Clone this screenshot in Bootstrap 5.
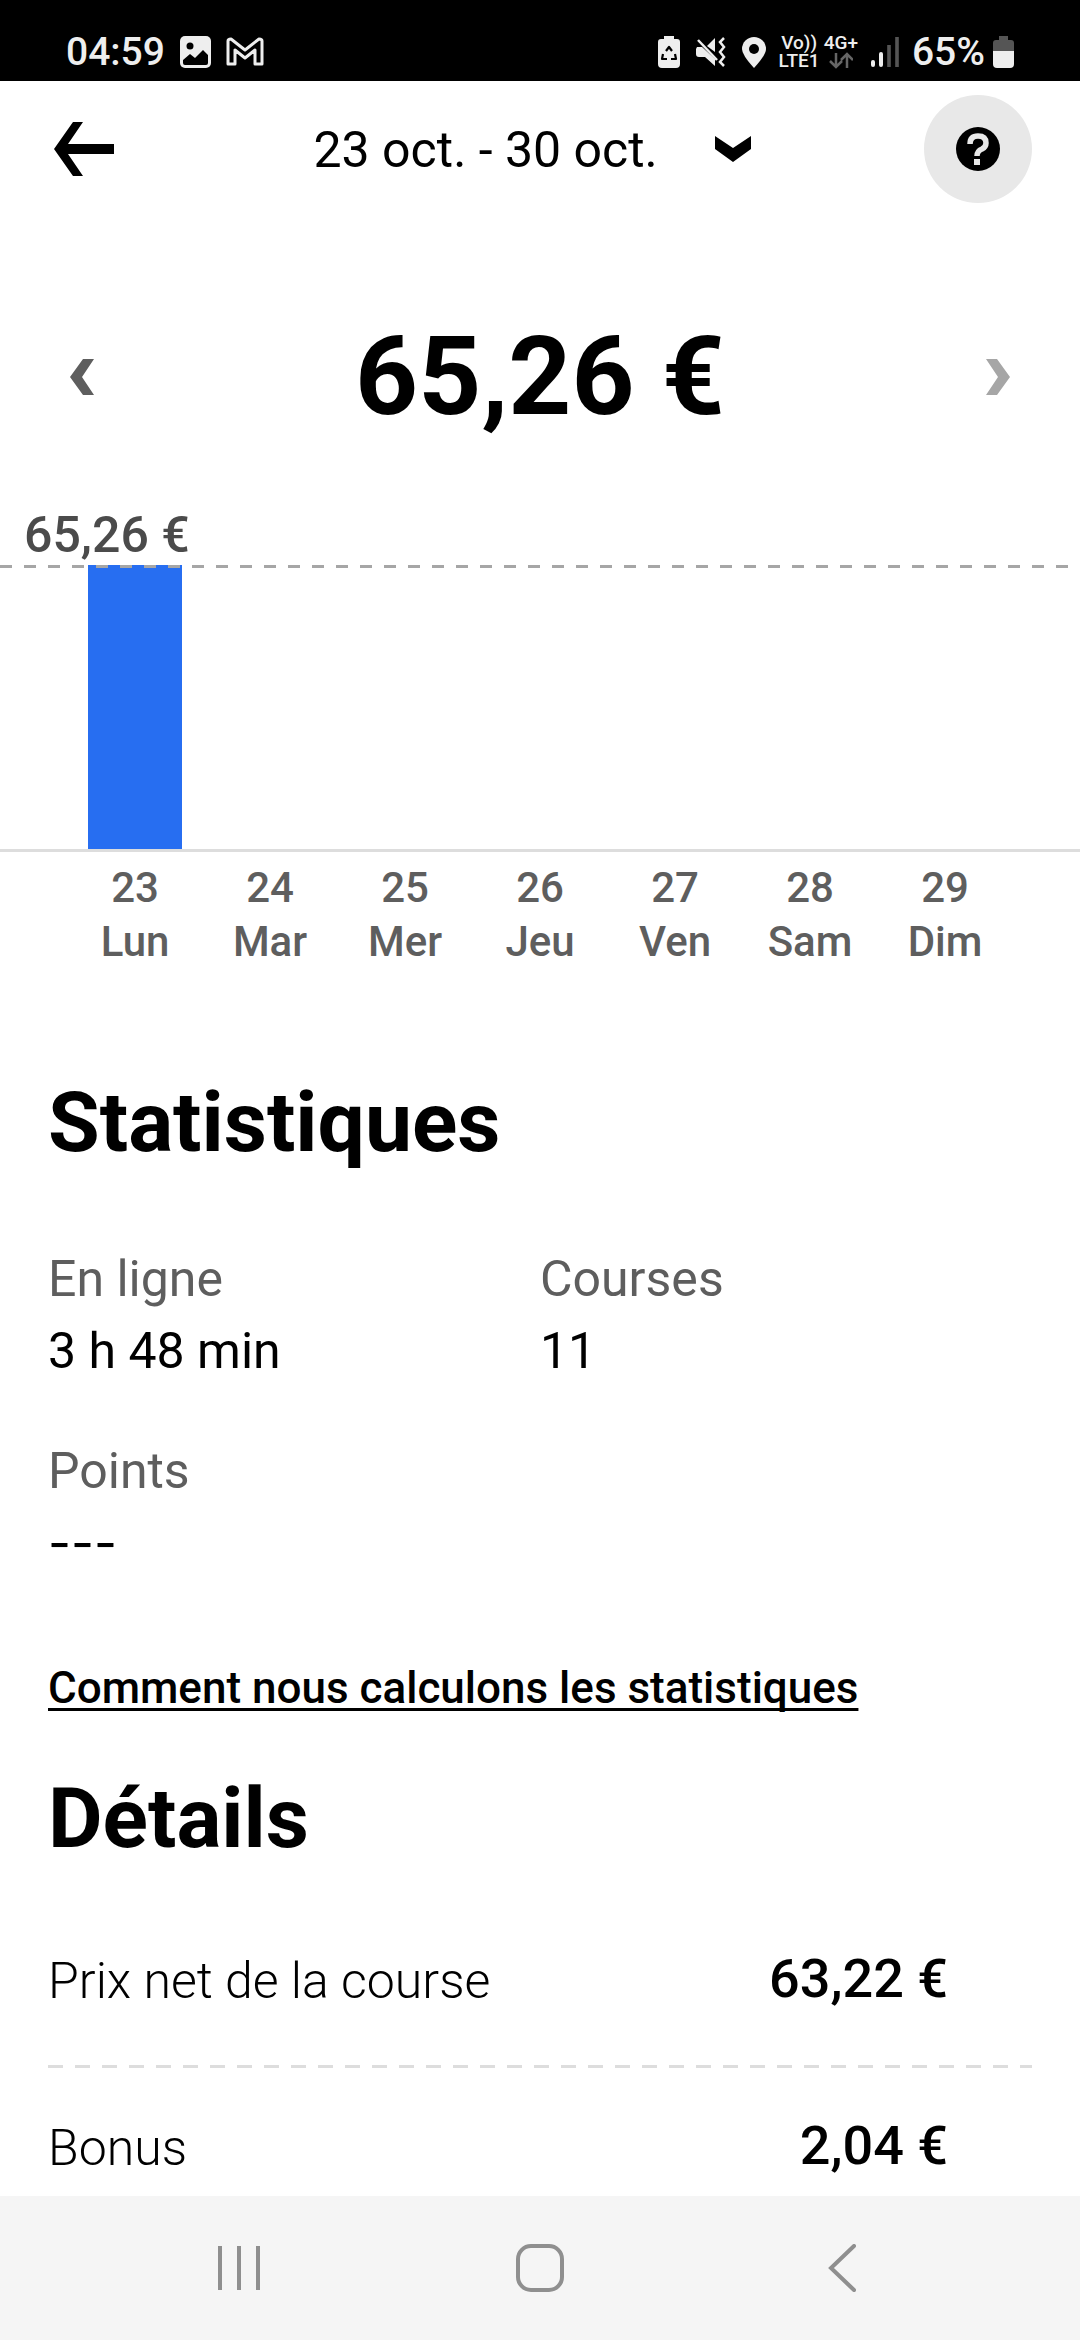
<!DOCTYPE html>
<html lang="fr">
<head>
<meta charset="utf-8">
<meta name="viewport" content="width=device-width, initial-scale=1">
<title>Revenus</title>
<link href="https://cdn.jsdelivr.net/npm/bootstrap@5.3.0/dist/css/bootstrap.min.css" rel="stylesheet">
<style>
body{font-family:Roboto,"Liberation Sans",sans-serif;color:#000;background:#fff}
svg{display:block;flex:none}
.page-x{padding-left:48px;padding-right:48px}
.status{height:81px;padding:28px 66px 0 66px;color:#eee;background:#000}
.status-start{gap:15px}
.status-end{gap:13px}
.status-icons{gap:16px}
.clock{font-size:39px;line-height:48px;font-weight:500}
.net{font-size:19px;line-height:18px;font-weight:500}
.net-pair{gap:4px}
.top-bar{padding-top:14px;padding-bottom:14px}
.icon-btn{width:108px;height:108px}
.help{background:#e8e8e8}
.period{appearance:none;border:0;font-size:50px;line-height:64px;padding:2px 108px 0 0;color:#000;
background:transparent url("data:image/svg+xml,%3Csvg xmlns='http://www.w3.org/2000/svg' viewBox='0 0 36 26'%3E%3Cpath d='M0 0l18 12L36 0v13L18 26 0 13z'/%3E%3C/svg%3E") no-repeat right 16px center/36px 26px}
.total{padding-top:96px;padding-bottom:68px}
.step{width:68px;height:68px}
.amount{font-size:110px;line-height:128px;font-weight:700}
.peak{font-size:50px;line-height:52px;font-weight:500;color:#4b4b4b;padding:0 0 4px 24px}
.dash{height:3px;background:repeating-linear-gradient(90deg,#a6a6a6 0 12px,transparent 12px 24px)}
.plot{height:284px;border-bottom:3px solid #ddd;box-sizing:content-box}
.days{padding-left:6.25%;padding-right:6.25%}
.bar{width:70%;background:#276ef1}
.day{font-size:42px;line-height:54px;font-weight:500;color:#5e5e5e;padding-top:9px}
.stats{padding-top:106px}
.details{padding-top:55px}
.section-title{font-size:84px;line-height:96px;font-weight:700}
.stat-grid{padding-top:72px}
.label{font-size:50px;line-height:72px;color:#5e5e5e}
.value{font-size:50px;line-height:72px}
.empty-value{font-family:Inter,Roboto,sans-serif}
.stat{margin-bottom:48px}
.help-link{font-size:44px;line-height:56px;font-weight:500;color:#000;margin-top:33px;text-decoration-thickness:3px;text-underline-offset:5px;text-decoration-skip-ink:none}
.line-name{font-size:50px;line-height:64px;font-weight:300}
.line-sum{font-size:54px;line-height:60px;font-weight:500;padding-right:84px}
.line-list{padding-top:82px}
.rule{height:3px;margin:52px 0 48px;background:repeating-linear-gradient(90deg,#ddd 0 15px,transparent 15px 27px)}
.sys-nav{height:144px;padding:0 88px;background:#f5f5f5}
</style>
<script src="https://cdn.jsdelivr.net/npm/bootstrap@5.3.0/dist/js/bootstrap.bundle.min.js"></script>
</head>
<body>
<div class="status d-flex justify-content-between align-items-start">
  <div class="status-start d-flex align-items-center">
    <span class="clock">04:59</span>
    <svg width="31" height="32" viewBox="0 0 31 32"><rect width="31" height="32" rx="5" fill="#eee"/><circle cx="10" cy="10" r="3.5"/><path d="M3 24l7-6 5 4 8-8 5 5v8q0 2-2 2H5q-2 0-2-2z"/></svg>
    <svg width="38" height="30" viewBox="0 0 38 30"><path d="M2 4q0-2 3-2l14 11L33 2q3 0 3 2v23h-7V13L19 21 9 13v14H2z" fill="none" stroke="#eee" stroke-width="3" stroke-linejoin="round"/></svg>
  </div>
  <div class="status-end d-flex align-items-center">
    <div class="status-icons d-flex align-items-center">
      <svg width="22" height="32" viewBox="0 0 22 32"><path d="M6 0h10v3h3q3 0 3 3v22q0 4-4 4H4q-4 0-4-4V6q0-3 3-3h3z" fill="#eee"/><path d="M8 15l3-4 3 4M5 18l-1 5h5M13 23h5l-1-5" fill="none" stroke="#000" stroke-width="2.2" stroke-linejoin="round"/></svg>
      <svg width="30" height="30" viewBox="0 0 30 30"><path d="M1 10h5l13 12v7L9 20H3q-3 0-3-3v-5zM11 9l8-8v14z" fill="#eee"/><path d="M2 3l19 20" stroke="#eee" stroke-width="2.5"/><path d="M28 1l-4 4 4 5-4 5 4 5-4 5 4 4" fill="none" stroke="#eee" stroke-width="2.5"/></svg>
      <svg width="24" height="31" viewBox="0 0 24 31"><path d="M12 31Q0 18 0 12a12 12 0 0 1 24 0q0 6-12 19z" fill="#eee"/><circle cx="12" cy="12" r="5"/></svg>
    </div>
    <div class="net net-pair d-flex">
      <div class="text-center">Vo))<br>LTE1</div>
      <div class="d-flex flex-column align-items-center"><span>4G+</span><svg width="24" height="17" viewBox="0 0 24 17"><path d="M7 1v13M1 9l6 6 6-6M18 16V3M12 8l6-6 6 6" fill="none" stroke="#666" stroke-width="2.5"/></svg></div>
    </div>
    <svg width="28" height="30" viewBox="0 0 28 30"><path d="M2 28v-3M10 28V17" stroke="#eee" stroke-width="4" stroke-linecap="round"/><path d="M18 30V8M26 30V0" stroke="#555" stroke-width="3.6"/></svg>
    <div class="d-flex align-items-center gap-2">
      <span class="clock">65%</span>
      <svg width="21" height="32" viewBox="0 0 21 32"><path d="M6 0h9v4h3q3 0 3 3v9H0V7q0-3 3-3h3z" fill="#555"/><path d="M0 15h21v13q0 4-4 4H4q-4 0-4-4z" fill="#eee"/></svg>
    </div>
  </div>
</div>

<header class="top-bar page-x d-flex justify-content-between align-items-center">
  <button class="icon-btn btn border-0 p-0" aria-label="Retour"><svg width="66" height="54" viewBox="0 0 66 54"><path d="M25 0h10L20 22h46v10H20l15 22H25L6 27z"/></svg></button>
  <select class="period" aria-label="Période"><option>23 oct. - 30 oct.</option></select>
  <button class="icon-btn help btn border-0 rounded-circle p-0 d-flex align-items-center justify-content-center" aria-label="Aide"><svg width="44" height="44" viewBox="0 0 44 44"><circle cx="22" cy="22" r="22"/><path d="M14 17q0-8 8-8t8 7q0 4-4 6-5 2-5 7" fill="none" stroke="#e8e8e8" stroke-width="5.5"/><path d="M18 32h6v6h-6z" fill="#e8e8e8"/></svg></button>
</header>

<main>
  <section class="total page-x d-flex justify-content-between align-items-center">
    <button class="step btn border-0 p-0 d-flex align-items-center justify-content-center" aria-label="Semaine précédente"><svg width="24" height="36" viewBox="0 0 24 36"><path d="M13 0h11L12 18l12 18H13L0 18z" fill="#5e5e5e"/></svg></button>
    <div class="amount">65,26 €</div>
    <button class="step btn border-0 p-0 d-flex align-items-center justify-content-center" aria-label="Semaine suivante"><svg width="24" height="36" viewBox="0 0 24 36"><path d="M11 0H0l12 18L0 36h11l13-18z" fill="#a6a6a6"/></svg></button>
  </section>

  <section aria-label="Revenus par jour">
    <div class="peak">65,26 €</div>
    <div class="position-relative">
      <div class="dash position-absolute top-0 start-0 w-100"></div>
      <div class="plot"><div class="days row g-0 h-100"><div class="col d-flex justify-content-center align-items-end"><div class="bar" style="height:100%"></div></div><div class="col"></div><div class="col"></div><div class="col"></div><div class="col"></div><div class="col"></div><div class="col"></div></div></div>
    </div>
    <div class="days day row g-0 text-center">
      <div class="col">23<br>Lun</div><div class="col">24<br>Mar</div><div class="col">25<br>Mer</div><div class="col">26<br>Jeu</div><div class="col">27<br>Ven</div><div class="col">28<br>Sam</div><div class="col">29<br>Dim</div>
    </div>
  </section>

  <section class="stats page-x">
    <h2 class="section-title mb-0">Statistiques</h2>
    <div class="stat-grid row g-0">
      <div class="col-6 stat"><div class="label">En ligne</div><div class="value">3 h 48 min</div></div>
      <div class="col-6 stat"><div class="label">Courses</div><div class="value">11</div></div>
      <div class="col-6 stat"><div class="label">Points</div><div class="value empty-value">---</div></div>
    </div>
    <a class="help-link d-block" href="#">Comment nous calculons les statistiques</a>
  </section>

  <section class="details page-x">
    <h2 class="section-title mb-0">Détails</h2>
    <div class="line-list">
      <div class="d-flex justify-content-between"><span class="line-name">Prix net de la course</span><span class="line-sum">63,22 €</span></div>
      <div class="rule"></div>
      <div class="d-flex justify-content-between"><span class="line-name">Bonus</span><span class="line-sum">2,04 €</span></div>
    </div>
  </section>
</main>

<nav class="sys-nav fixed-bottom d-flex justify-content-around align-items-center">
  <button class="btn border-0 p-0" aria-label="Applications récentes"><svg width="48" height="48" viewBox="0 0 48 48"><path d="M5 2v44M24 2v44M43 2v44" stroke="#8f8f8f" stroke-width="4"/></svg></button>
  <button class="btn border-0 p-0" aria-label="Accueil"><svg width="48" height="48" viewBox="0 0 48 48"><rect x="2" y="2" width="44" height="44" rx="13" fill="none" stroke="#8f8f8f" stroke-width="4"/></svg></button>
  <button class="btn border-0 p-0" aria-label="Précédent"><svg width="48" height="48" viewBox="0 0 48 48"><path d="M37 2L14 24l23 22" fill="none" stroke="#8f8f8f" stroke-width="4" stroke-linecap="round"/></svg></button>
</nav>
</body>
</html>
